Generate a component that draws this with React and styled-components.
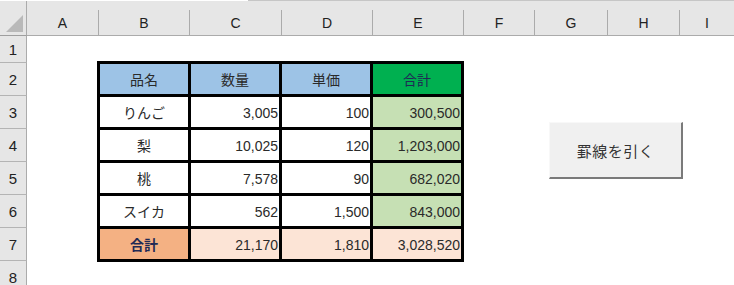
import React from "react";
import styled, { createGlobalStyle } from "styled-components";

const GlobalStyle = createGlobalStyle`
    html, body {
        margin: 0;
        padding: 0;
        background: #fff;
        overflow: hidden;
    }
    * {
        box-sizing: border-box;
    }
`;

const COLS = ["A", "B", "C", "D", "E", "F", "G", "H", "I"];
const ROWS = [1, 2, 3, 4, 5, 6, 7, 8];

const Page = styled.div`
    width: 734px;
    height: 285px;
    font-family: "Liberation Sans", "Noto Sans CJK JP", sans-serif;
    color: #222;
`;

const TopRule = styled.div`
    height: 1px;
    margin-left: 248px;
    background: #c6c6c6;
`;

const Sheet = styled.div`
    position: relative;
    display: grid;
    grid-template-columns: 27px 72px 91px 92px 91px 91px 71px 73px 72px 1fr;
    grid-template-rows: 35px 27px repeat(7, 33px);
`;

const Corner = styled.div`
    grid-row: 1;
    grid-column: 1;
    background: #e6e6e6;
    border-bottom: 1px solid #9e9e9e;
    border-right: 1px solid #ababab;
    display: flex;
    align-items: flex-end;
    justify-content: flex-end;
    padding: 0 3px 3px 0;
`;

const ColHead = styled.div`
    grid-row: 1;
    background: #e6e6e6;
    border-bottom: 1px solid #9e9e9e;
    border-right: ${(props) => (props.last ? "0" : "1px")} solid;
    border-image: linear-gradient(to bottom, transparent 10px, #ababab 10px) 1;
    display: flex;
    align-items: center;
    justify-content: center;
    padding-top: 10px;
    font-size: 14px;
    color: #222;
`;

const RowHead = styled.div`
    grid-column: 1;
    grid-row: ${(props) => props.row + 1};
    background: #e6e6e6;
    border-right: 1px solid #ababab;
    border-bottom: 1px solid #b4b4b4;
    display: flex;
    align-items: center;
    justify-content: center;
    font-size: 15px;
    color: #222;
`;

const Table = styled.div`
    grid-column: 3 / 7;
    grid-row: 3 / 9;
    justify-self: start;
    align-self: start;
    margin: -2px 0 0 -2px;
    display: grid;
    grid-template-columns: repeat(4, 88px);
    grid-template-rows: repeat(6, 30px);
    gap: 3px;
    padding: 3px;
    background: #000;
`;

const Cell = styled.div`
    background: ${(props) => props.bg || "#fff"};
    color: ${(props) => props.color || "#2a2a2a"};
    font-weight: ${(props) => (props.bold ? 700 : 400)};
    font-size: 14px;
    display: flex;
    align-items: center;
    justify-content: ${(props) => (props.num ? "flex-end" : "center")};
    padding: ${(props) => (props.num ? "1px 1px 0 0" : "0")};
    font-family: ${(props) =>
        props.num
            ? `"Liberation Sans", "Noto Sans CJK JP", sans-serif`
            : `"Noto Sans CJK JP", sans-serif`};
`;

const Button = styled.div`
    position: absolute;
    left: 549px;
    top: 121px;
    width: 134px;
    height: 57px;
    background: #f0f0f0;
    border-top: 1px solid #f8f8f8;
    border-left: 1px solid #f8f8f8;
    border-right: 2px solid #7a7a7a;
    border-bottom: 2px solid #7a7a7a;
    display: flex;
    align-items: center;
    justify-content: center;
    font-family: "Noto Sans CJK JP", sans-serif;
    font-size: 15px;
    color: #333;
    letter-spacing: 0.5px;
`;

const HEAD_BLUE = "#9dc3e6";
const GREEN = "#00b050";
const LIGHT_GREEN = "#c6e0b4";
const ORANGE = "#f4b183";
const PEACH = "#fce4d6";
const NAVY = "#1f2a55";

const items = [
    { name: "りんご", qty: "3,005", price: "100", total: "300,500" },
    { name: "梨", qty: "10,025", price: "120", total: "1,203,000" },
    { name: "桃", qty: "7,578", price: "90", total: "682,020" },
    { name: "スイカ", qty: "562", price: "1,500", total: "843,000" },
];

const App = () => {
    return (
        <Page>
            <GlobalStyle />
            <TopRule />
            <Sheet>
                <Corner>
                    <svg width="17" height="17" viewBox="0 0 17 17">
                        <polygon points="17,0 17,17 0,17" fill="#b9b9b9" />
                    </svg>
                </Corner>
                {COLS.map((c, i) => (
                    <ColHead key={c} last={i === COLS.length - 1}>
                        {c}
                    </ColHead>
                ))}
                {ROWS.map((r) => (
                    <RowHead key={r} row={r}>
                        {r}
                    </RowHead>
                ))}
                <Table>
                    <Cell bg={HEAD_BLUE}>品名</Cell>
                    <Cell bg={HEAD_BLUE}>数量</Cell>
                    <Cell bg={HEAD_BLUE}>単価</Cell>
                    <Cell bg={GREEN} color={NAVY}>合計</Cell>
                    {items.map((item) => (
                        <React.Fragment key={item.name}>
                            <Cell>{item.name}</Cell>
                            <Cell num>{item.qty}</Cell>
                            <Cell num>{item.price}</Cell>
                            <Cell num bg={LIGHT_GREEN}>{item.total}</Cell>
                        </React.Fragment>
                    ))}
                    <Cell bg={ORANGE} color={NAVY} bold>合計</Cell>
                    <Cell num bg={PEACH}>21,170</Cell>
                    <Cell num bg={PEACH}>1,810</Cell>
                    <Cell num bg={PEACH}>3,028,520</Cell>
                </Table>
                <Button>罫線を引く</Button>
            </Sheet>
        </Page>
    );
};

export default App;
